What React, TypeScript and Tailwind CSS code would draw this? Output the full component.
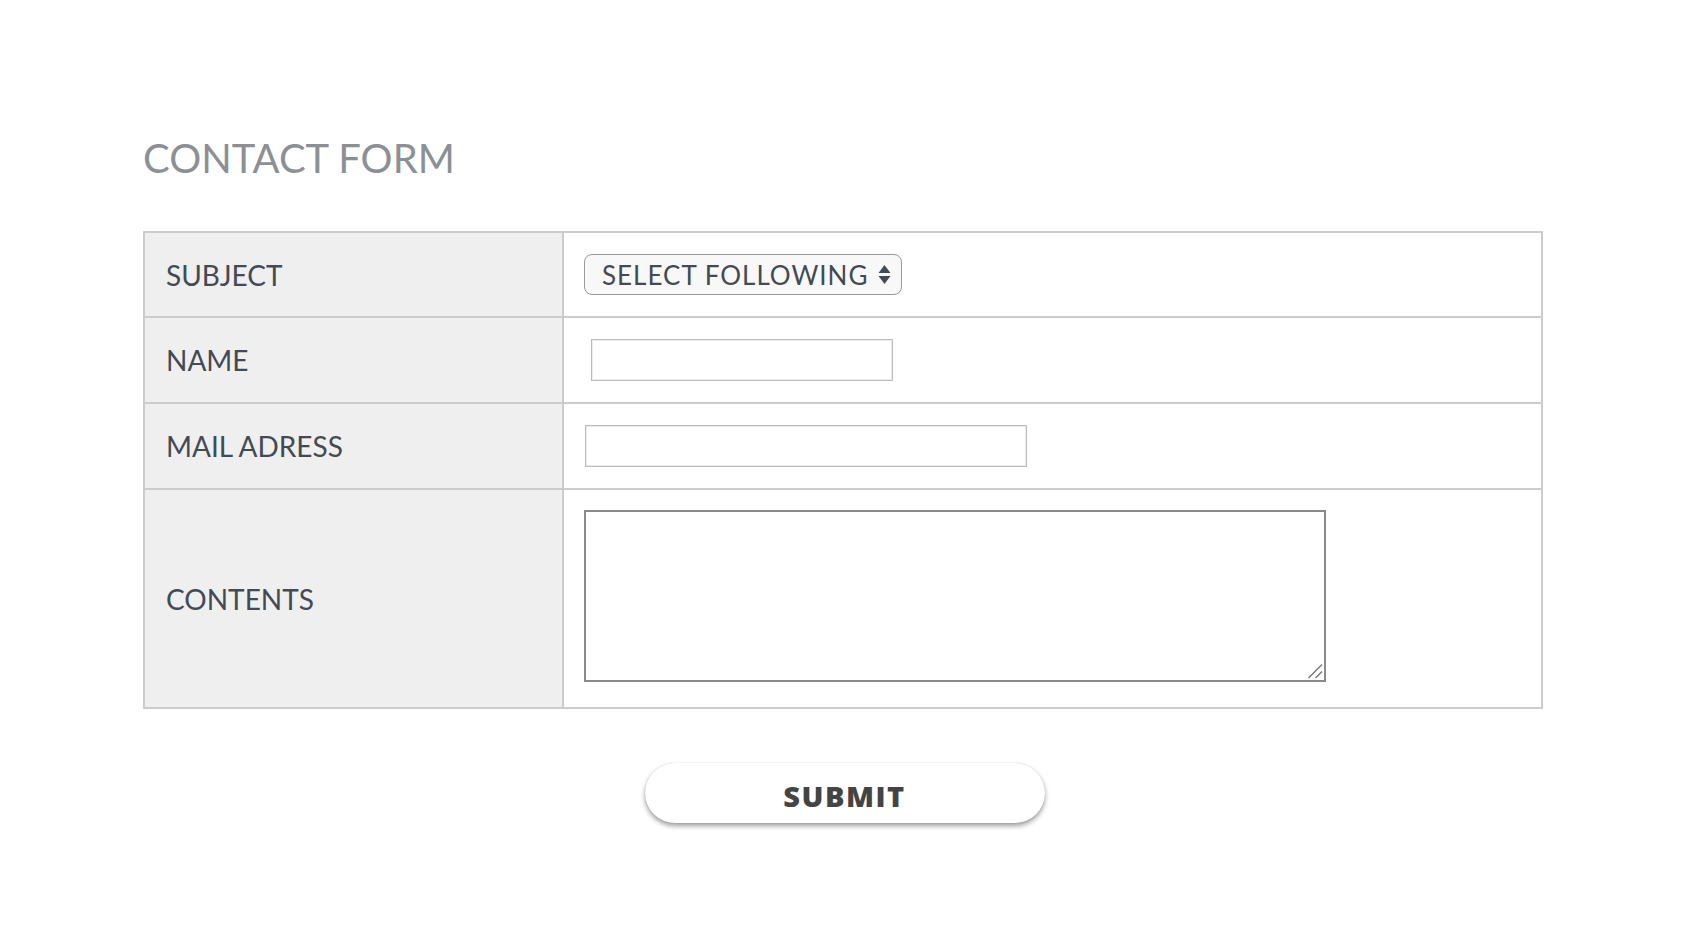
import React from "react";

const font = { fontFamily: "Lato, 'Open Sans', sans-serif" };

function Row({
  label,
  children,
  h,
  top,
  alignStart,
}: {
  label: string;
  children: React.ReactNode;
  h: string;
  top?: boolean;
  alignStart?: boolean;
}) {
  return (
    <div className={`flex ${h} ${top ? "border-t-2 border-[#cccccc]" : ""}`}>
      <div className="flex w-[419px] shrink-0 items-center border-r-2 border-[#cccccc] bg-[#efefef] pl-[21px]">
        <span className="text-[28px] tracking-[0px] text-[#434a54]">{label}</span>
      </div>
      <div className={`flex flex-1 bg-white ${alignStart ? "items-start pt-[20px]" : "items-center"}`}>
        {children}
      </div>
    </div>
  );
}

export default function App() {
  return (
    <div className="min-h-screen w-full bg-white" style={font}>
      <div className="w-[1400px] ml-[143px] pt-[134px]">
        <h1 className="h-[48px] text-[40px] font-normal leading-[48px] tracking-[0px] text-[#8c9096]">
          CONTACT FORM
        </h1>
        <div className="mt-[49px] border-2 border-[#cccccc]">
          <Row label="SUBJECT" h="h-[83px]">
            <div className="ml-[20px] flex h-[41px] w-[318px] items-center justify-between rounded-[8px] border border-[#9a9a9a] bg-[#f8f8f8] pl-[17px] pr-[10px]">
              <span className="text-[26px] leading-none tracking-[1px] text-[#434a54]">SELECT FOLLOWING</span>
              <svg width="13" height="21" viewBox="0 0 13 21" className="shrink-0">
                <path d="M6.5 1 L12.5 9 L0.5 9 Z" fill="#434a54" />
                <path d="M6.5 20 L12.5 12 L0.5 12 Z" fill="#434a54" />
              </svg>
            </div>
          </Row>
          <Row label="NAME" h="h-[86px]" top>
            <input
              type="text"
              className="ml-[27px] h-[42px] w-[302px] border border-[#bbbbbb] bg-white shadow-[inset_0_0_0_1px_#ececec] outline-none"
            />
          </Row>
          <Row label="MAIL ADRESS" h="h-[86px]" top>
            <input
              type="text"
              className="ml-[21px] h-[42px] w-[442px] border border-[#bbbbbb] bg-white shadow-[inset_0_0_0_1px_#ececec] outline-none"
            />
          </Row>
          <Row label="CONTENTS" h="h-[219px]" top alignStart>
            <div className="relative ml-[20px] h-[172px] w-[742px]">
              <textarea className="block h-full w-full resize-none border-2 border-[#8a8a8a] bg-white outline-none" />
              <svg
                width="16"
                height="16"
                viewBox="0 0 16 16"
                className="pointer-events-none absolute bottom-[3px] right-[3px]"
              >
                <path d="M1.5 15 L15 1.5" stroke="#6f6f6f" strokeWidth="1.3" />
                <path d="M8.5 15 L15 8.5" stroke="#6f6f6f" strokeWidth="1.3" />
              </svg>
            </div>
          </Row>
        </div>
        <div className="mt-[54px] flex justify-center pl-[3px]">
          <button
            className="flex h-[60px] w-[400px] items-center justify-center rounded-full bg-white pt-[4px] shadow-[0_3px_5px_rgba(0,0,0,0.38),0_0_1px_rgba(0,0,0,0.2)]"
            style={{ fontFamily: "'Open Sans', Lato, sans-serif" }}
          >
            <span className="text-[29px] font-extrabold leading-none tracking-[1.5px] text-[#444444]">SUBMIT</span>
          </button>
        </div>
      </div>
    </div>
  );
}
